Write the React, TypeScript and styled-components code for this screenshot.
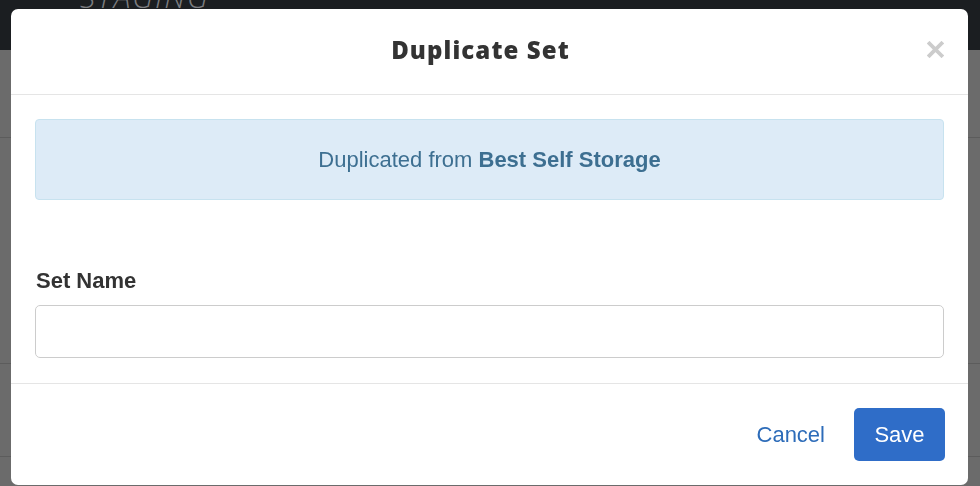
import React from "react";
import styled, { createGlobalStyle } from "styled-components";

const GlobalStyle = createGlobalStyle`
  html, body {
    margin: 0;
    padding: 0;
    height: 100%;
    overflow: hidden;
  }
  body {
    font-family: "Liberation Sans", Arial, sans-serif;
    background: #6b6b6b;
  }
`;

function CloseIcon() {
  return (
    <svg width="17" height="17" viewBox="0 0 17 17" aria-hidden="true">
      <path
        d="M2.5 2.5 L14.5 14.5 M14.5 2.5 L2.5 14.5"
        stroke="#cccccc"
        strokeWidth="3.8"
        strokeLinecap="square"
        fill="none"
      />
    </svg>
  );
}

function App() {
  return (
    <>
      <GlobalStyle />
      <SPage>
        <STopBar>
          <SStaging>STAGING</SStaging>
        </STopBar>
        <SPageBody>
          <SPageRow $height={87} />
          <SPageRow $height={225} />
          <SPageRow $height={92} />
        </SPageBody>
      </SPage>

      <SModal role="dialog" aria-labelledby="dup-title">
        <SHeader>
          <STitle id="dup-title">Duplicate Set</STitle>
          <SClose type="button" aria-label="Close">
            <CloseIcon />
          </SClose>
        </SHeader>

        <SBody>
          <SAlert>
            Duplicated from <strong>Best Self Storage</strong>
          </SAlert>
          <SLabel htmlFor="set-name">Set Name</SLabel>
          <SInput id="set-name" type="text" />
        </SBody>

        <SFooter>
          <SLinkButton type="button">Cancel</SLinkButton>
          <SPrimaryButton type="button">Save</SPrimaryButton>
        </SFooter>
      </SModal>
    </>
  );
}

export default App;

const SPage = styled.div`
  width: 100%;
  height: 100vh;
  display: flex;
  flex-direction: column;
  background: #6b6b6b;
`;

const STopBar = styled.div`
  height: 50px;
  background: #1b1e21;
  padding-left: 80px;
  display: flex;
  align-items: flex-start;
  overflow: hidden;
`;

const SStaging = styled.span`
  font-family: "Open Sans", sans-serif;
  font-size: 30px;
  font-weight: 300;
  font-style: italic;
  letter-spacing: 2px;
  color: #7b7d80;
  line-height: 1;
  margin-top: -18px;
`;

const SPageBody = styled.div`
  flex: 1;
  display: flex;
  flex-direction: column;
`;

const SPageRow = styled.div<{ $height: number }>`
  height: ${(p) => p.$height}px;
  border-bottom: 1px solid #5c5c5c;
`;

const SModal = styled.div`
  position: fixed;
  top: 9px;
  left: 11px;
  width: 957px;
  height: 476px;
  background: #fff;
  border-radius: 7px;
  display: flex;
  flex-direction: column;
  overflow: hidden;
`;

const SHeader = styled.div`
  position: relative;
  height: 85px;
  border-bottom: 1px solid #e5e5e5;
  display: flex;
  align-items: center;
  justify-content: center;
`;

const STitle = styled.h4`
  margin: -4px 18px 0 0;
  font-family: "Open Sans", sans-serif;
  font-weight: 800;
  font-size: 24px;
  letter-spacing: 1.1px;
  color: #333;
  line-height: 1;
`;

const SClose = styled.button`
  position: absolute;
  top: 32px;
  right: 24px;
  padding: 0;
  border: 0;
  background: none;
  cursor: pointer;
  display: flex;
`;

const SBody = styled.div`
  padding: 24px 24px 25px;
  display: flex;
  flex-direction: column;
  border-bottom: 1px solid #e5e5e5;
`;

const SAlert = styled.div`
  height: 81px;
  box-sizing: border-box;
  background: #ddebf7;
  border: 1px solid #c7e2ef;
  border-radius: 4px;
  color: #3d6f91;
  font-size: 22px;
  line-height: 79px;
  text-align: center;
  margin-bottom: 68px;

  strong {
    font-weight: 700;
  }
`;

const SLabel = styled.label`
  font-size: 22px;
  font-weight: 700;
  color: #333;
  line-height: 26px;
  margin-bottom: 11px;
  padding-left: 1px;
`;

const SInput = styled.input`
  height: 53px;
  box-sizing: border-box;
  border: 1px solid #cccccc;
  border-radius: 5px;
  padding: 0 14px;
  font-size: 20px;
  font-family: "Liberation Sans", Arial, sans-serif;
  outline: none;
`;

const SFooter = styled.div`
  flex: 1;
  display: flex;
  align-items: flex-start;
  justify-content: flex-end;
  padding: 24px 23px;
  gap: 29px;
`;

const SLinkButton = styled.button`
  height: 53px;
  border: 0;
  background: none;
  padding: 0;
  color: #2d6cb9;
  font-size: 22px;
  font-family: "Liberation Sans", Arial, sans-serif;
  cursor: pointer;
`;

const SPrimaryButton = styled.button`
  width: 91px;
  height: 53px;
  border: 0;
  border-radius: 5px;
  background: #2f6dc8;
  color: #fff;
  font-size: 22px;
  font-family: "Liberation Sans", Arial, sans-serif;
  cursor: pointer;
`;
